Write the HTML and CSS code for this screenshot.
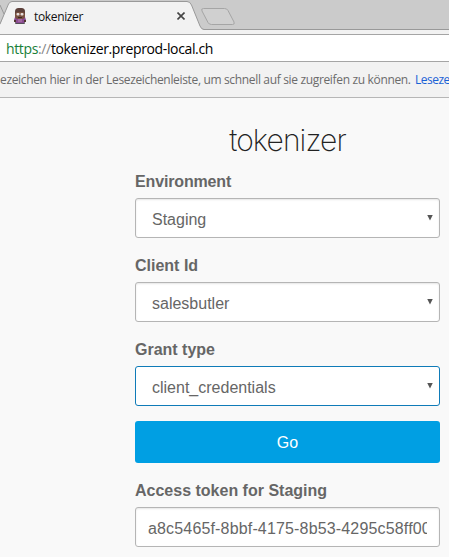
FILE: index.html
```
<!DOCTYPE html>
<html lang="de">
<head>
<meta charset="utf-8">
<title>tokenizer</title>
<link rel="stylesheet" href="styles.css">
</head>
<body>
<header class="browser">
  <div class="tabstrip">
    <svg class="tab-shapes" width="449" height="34" viewBox="0 0 449 34">
      <rect width="449" height="34" fill="#cbcbcb"/>
      <path d="M0 29.500H449V34H0z" fill="#f2f2f2"/>
      <path d="M202 29.500H449" stroke="#999" fill="none"/>
      <path d="M-2 30L8 5Q9.500 1.500 12 1.500H187Q190 1.500 191.500 5L200 26Q201.500 29.500 204 29.500V34H-2z" fill="#f2f2f2"/>
      <path d="M0 24L8.500 4Q10 1.500 12 1.500H187Q190 1.500 191.500 5L200 26Q201.500 29.500 204 29.500" fill="none" stroke="#999"/>
      <path d="M0 5L4 14" stroke="#999" fill="none"/>
      <path d="M203.500 8.500H224.500Q227 8.500 228 10.500L234 22Q235 24.500 232.500 24.500H211.500Q209 24.500 208 22.500L202 11Q200.800 8.500 203.500 8.500z" fill="#d0d0d0" stroke="#a5a5a5"/>
    </svg>
    <div class="tab">
      <svg class="favicon" width="14" height="17" viewBox="0 0 14 17">
        <rect x="2" y="14" width="10" height="2" rx="1" fill="#555058"/>
        <path d="M2 9h10l1 3-2 3H3l-2-3z" fill="#8a4c91"/>
        <path d="M1 12h2v2H1zM11 12h2v2h-2z" fill="#51342f"/>
        <rect x="5" y="10" width="4" height="4" fill="#a268a2"/>
        <rect x="2" y="0" width="10" height="10" rx="3.500" fill="#5c403a"/>
        <rect x="2" y="4" width="10" height="7" rx="3" fill="#79503f"/>
        <rect x="3.500" y="5" width="3" height="2.500" rx="1" fill="#e6dfdc"/>
        <rect x="7.500" y="5" width="3" height="2.500" rx="1" fill="#e6dfdc"/>
        <path d="M5 9.500h4" stroke="#3d2827"/>
      </svg>
      <span class="tab-title">tokenizer</span>
      <svg class="close" width="8" height="8" viewBox="0 0 8 8"><path d="M.5.500l7 7M7.500.500l-7 7" stroke="#444" stroke-width="1.600"/></svg>
    </div>
  </div>
  <div class="address"><span class="url"><span class="scheme">https</span><span class="slashes">://</span>tokenizer.preprod-local.ch</span></div>
  <div class="bookmarks"><span class="hint">ezeichen hier in der Lesezeichenleiste, um schnell auf sie zugreifen zu können.</span><a class="import">Leseze</a></div>
</header>
<main class="page">
  <h1 class="title">tokenizer</h1>
  <form class="form">
    <label class="label env">Environment</label>
    <div class="field">Staging<i class="arrow"></i></div>
    <label class="label">Client Id</label>
    <div class="field">salesbutler<i class="arrow"></i></div>
    <label class="label">Grant type</label>
    <div class="field focused">client_credentials<i class="arrow"></i></div>
    <button class="go" type="button">Go</button>
    <label class="label">Access token for Staging</label>
    <div class="field token"><span class="value">a8c5465f-8bbf-4175-8b53-4295c58ff00</span></div>
  </form>
</main>
</body>
</html>
```
FILE: styles.css
```
* { box-sizing: border-box; }
html, body { height: 100%; overflow: hidden; }
body { margin: 0; background: #f9f9f9; font-family: "Liberation Sans", sans-serif; }
.browser { font-family: "Open Sans", "Noto Sans", sans-serif; white-space: nowrap; }
.tabstrip { position: relative; height: 34px; }
.tab-shapes { position: absolute; inset: 0; }
.tab { position: relative; display: flex; align-items: center; width: 200px; height: 32px; padding-left: 13px; }
.tab-title { margin-left: 7px; width: 136px; font-size: 12px; letter-spacing: -0.35px; color: #111; }
.close { margin-left: 7px; }
.address { display: flex; align-items: center; height: 28px; padding-left: 6px; background: #fff; border: solid #a5a5a5; border-width: 1px 0; font-size: 14px; color: #000; }
.url { letter-spacing: -0.36px; }
.scheme { color: #188038; }
.slashes { color: #888; }
.bookmarks { display: flex; align-items: center; height: 36px; background: #f2f2f2; border-bottom: 1px solid #b6b6b6; font-size: 12px; color: #6b6b6b; overflow: hidden; }
.hint { flex: none; width: 415px; letter-spacing: -0.34px; }
.import { flex: none; color: #1a62d6; letter-spacing: -0.5px; }
.page { width: 305px; margin-left: 135px; }
.title { margin: 0; padding-top: 22px; height: 73px; font: 200 30px/40px Inter, sans-serif; letter-spacing: -0.9px; text-align: center; color: #222; }
.form { display: flex; flex-direction: column; }
.label { height: 27px; font-size: 16px; font-weight: bold; line-height: 21px; color: #666; }
.env { letter-spacing: -0.15px; }
.field { display: flex; align-items: center; justify-content: space-between; height: 40px; margin-bottom: 17px; padding: 3px 6px 0 16px; border: 1px solid #b5b5b5; border-radius: 3px; background: #fff; box-shadow: inset 0 1px 2px rgba(0,0,0,.1); font-size: 16px; color: #666; }
.arrow { width: 6px; height: 6px; margin-top: -4px; background: #555; clip-path: polygon(0 0, 100% 0, 50% 100%); }
.focused { border-color: #0f7bb8; margin-bottom: 15px; box-shadow: none; }
.go { height: 42px; margin: 0 0 17px; padding: 2px 0 0; border: 0; border-radius: 3px; background: #009fe3; color: #fff; font: 16px "Liberation Sans", sans-serif; }
.token { padding: 3px 12px 0; }
.value { overflow: hidden; white-space: nowrap; letter-spacing: 0.16px; }
```
